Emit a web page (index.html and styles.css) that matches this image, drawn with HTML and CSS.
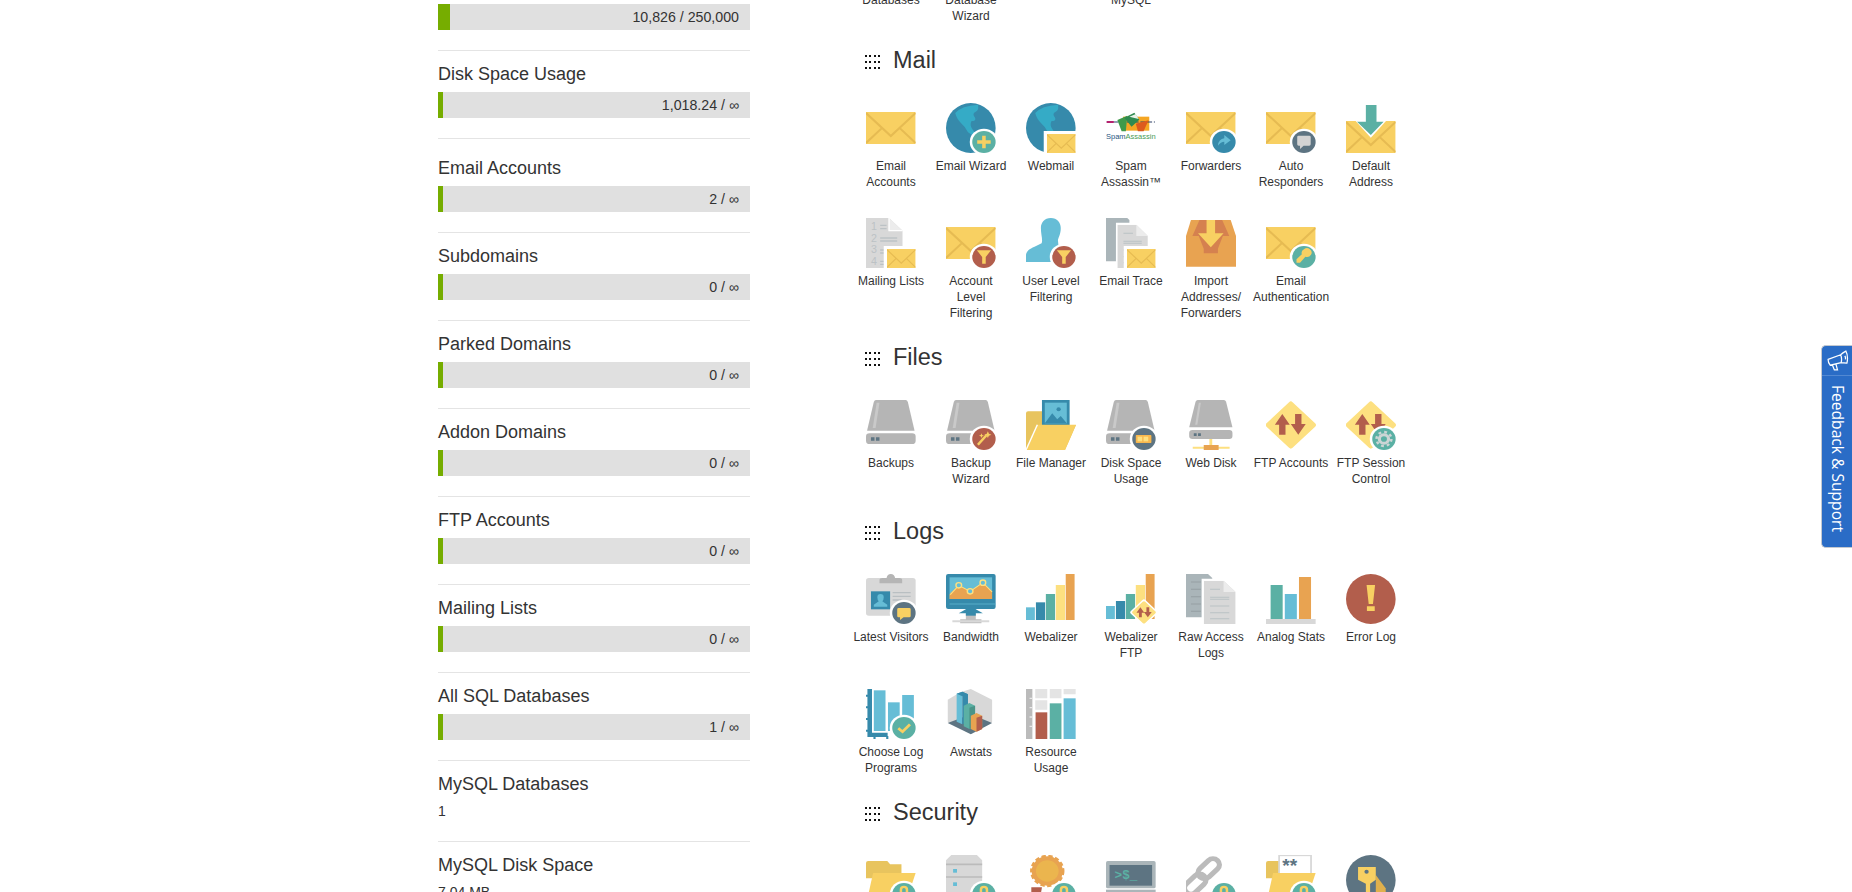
FILE: index.html
```html
<!DOCTYPE html>
<html lang="en">
<head>
<meta charset="utf-8">
<title>cPanel</title>
<link rel="stylesheet" href="styles.css">
</head>
<body>
<svg class="defs" xmlns="http://www.w3.org/2000/svg">
  <symbol id="env" viewBox="0 0 140 96" preserveAspectRatio="none"><rect width="140" height="96" fill="#f8d062"/><path d="M0 3 70 72 140 3M0 93 44 49M140 93 96 49" fill="none" stroke="#e6bb52" stroke-width="6"/></symbol>
  <symbol id="globe" viewBox="0 0 141 150"><ellipse cx="70" cy="75" rx="70" ry="75" fill="#368aab"/><path d="M26 30Q44 8 90 5 94 20 84 26 72 30 82 44 86 54 72 54 66 66 74 78L88 98Q74 100 62 88 54 70 44 62 30 48 26 30Z" fill="#35abc6"/></symbol>
  <symbol id="disk" viewBox="0 0 141 150"><path d="M28 0H112Q116 0 118 6L137 92H3L22 6Q24 0 28 0Z" fill="#b5b5b5"/><path d="M30 8H38L27 84H19Z" fill="#c9c9c9"/><rect y="100" width="140" height="32" rx="10" fill="#b5b5b5"/><path d="M14 112H24V122H14ZM28 112H38V122H28Z" fill="#5d7482"/></symbol>
  <symbol id="dia" viewBox="0 0 141 150"><rect x="18" y="23" width="104" height="104" rx="7" transform="rotate(45 70 75)" fill="#fde080"/></symbol>
  <symbol id="ar" viewBox="0 0 141 150"><path d="M46 42 67 74H55V104H37V74H25ZM91 104 70 72H82V42H100V72H112Z" fill="#b25e4c"/></symbol>
  <symbol id="docb" viewBox="0 0 90 130" preserveAspectRatio="none"><path d="M0 0H56L90 34V130H0Z" fill="#d8d8d8"/><path d="M56 0 90 34H56Z" fill="#ececec"/><path d="M18 26H46M18 50H72M18 56H72M18 76H72M18 96H72M18 114H72" stroke="#b9c1c4" stroke-width="3"/></symbol>
  <symbol id="dots" viewBox="0 0 15 14"><path fill="#111" d="M0 0h2v2H0zM4 0h2v2H4zM9 0h2v2H9zM13 0h2v2h-2zM0 6h2v2H0zM4 6h2v2H4zM9 6h2v2H9zM13 6h2v2h-2zM0 12h2v2H0zM4 12h2v2H4zM9 12h2v2H9zM13 12h2v2h-2z"/></symbol>
  <symbol id="ring" viewBox="0 0 141 150"><circle cx="107" cy="117" r="40" fill="#fff"/></symbol>
  <symbol id="lock" viewBox="0 0 141 150"><use href="#ring" width="141" height="150"/><circle cx="107" cy="117" r="33" fill="#5bb0a4"/><path d="M95 118V104Q95 92 107 92 119 92 119 104V118H112V104Q112 99 107 99 102 99 102 104V118Z" fill="#f8d062"/></symbol>
</svg>

<div class="page">
  <aside class="stats">
    <section class="stat stat-first"><h3 class="stat-name">File Usage</h3><div class="bar"><span class="fill" style="width:12px"></span><span class="val">10,826 / 250,000</span></div></section>
    <section class="stat"><h3 class="stat-name">Disk Space Usage</h3><div class="bar"><span class="fill" style="width:5px"></span><span class="val">1,018.24 / ∞</span></div></section>
    <section class="stat stat-loose"><h3 class="stat-name">Email Accounts</h3><div class="bar"><span class="fill" style="width:5px"></span><span class="val">2 / ∞</span></div></section>
    <section class="stat"><h3 class="stat-name">Subdomains</h3><div class="bar"><span class="fill" style="width:5px"></span><span class="val">0 / ∞</span></div></section>
    <section class="stat"><h3 class="stat-name">Parked Domains</h3><div class="bar"><span class="fill" style="width:5px"></span><span class="val">0 / ∞</span></div></section>
    <section class="stat"><h3 class="stat-name">Addon Domains</h3><div class="bar"><span class="fill" style="width:5px"></span><span class="val">0 / ∞</span></div></section>
    <section class="stat"><h3 class="stat-name">FTP Accounts</h3><div class="bar"><span class="fill" style="width:5px"></span><span class="val">0 / ∞</span></div></section>
    <section class="stat"><h3 class="stat-name">Mailing Lists</h3><div class="bar"><span class="fill" style="width:5px"></span><span class="val">0 / ∞</span></div></section>
    <section class="stat"><h3 class="stat-name">All SQL Databases</h3><div class="bar"><span class="fill" style="width:5px"></span><span class="val">1 / ∞</span></div></section>
    <section class="stat"><h3 class="stat-name">MySQL Databases</h3><div class="plain">1</div></section>
    <section class="stat"><h3 class="stat-name">MySQL Disk Space</h3><div class="plain">7.04 MB</div></section>
  </aside>

  <main class="tools">
    <section class="group group-cut">
      <div class="grid">
        <a class="item"><span class="label">MySQL®<br>Databases</span></a>
        <a class="item"><span class="label">MySQL®<br>Database<br>Wizard</span></a>
        <a class="item"><span class="label">phpMyAdmin</span></a>
        <a class="item"><span class="label">Remote<br>MySQL</span></a>
      </div>
    </section>

    <section class="group">
      <h2 class="group-title"><svg class="dots"><use href="#dots"/></svg>Mail</h2>
      <div class="grid">
        <a class="item"><svg class="ic" viewBox="0 0 141 150" preserveAspectRatio="none"><use href="#env" y="27" width="140" height="96"/></svg><span class="label">Email Accounts</span></a>
        <a class="item"><svg class="ic" viewBox="0 0 141 150" preserveAspectRatio="none"><use href="#globe" width="141" height="150"/><use href="#ring" width="141" height="150"/><circle cx="107" cy="117" r="33" fill="#5bb0a4"/><path d="M102 98H112V112H126V122H112V136H102V122H88V112H102Z" fill="#f8d062"/></svg><span class="label">Email Wizard</span></a>
        <a class="item"><svg class="ic" viewBox="0 0 141 150" preserveAspectRatio="none"><use href="#globe" width="141" height="150"/><rect x="50" y="84" width="91" height="66" fill="#fff"/><use href="#env" x="59" y="93" width="81" height="57"/></svg><span class="label">Webmail</span></a>
        <a class="item"><svg class="ic" viewBox="0 0 141 150" preserveAspectRatio="none"><rect x="48" y="41" width="74" height="42" fill="#f5a623"/><path d="M2 57H138" stroke="#2c3e66" stroke-width="3" stroke-dasharray="14 5"/><path d="M2 57H22" stroke="#b5216e" stroke-width="6"/><path d="M32 51 60 38 56 85 44 85Z" fill="#3f9a4a"/><path d="M52 44 80 29 94 50 72 71Z" fill="#2f8a50"/><path d="M66 41 84 33 92 48Z" fill="#e8f3e8"/><path d="M84 62 120 52 106 85 90 85Z" fill="#dd5a1e"/><text class="spam-t" x="0" y="108" textLength="140" lengthAdjust="spacingAndGlyphs"><tspan fill="#27557f">Spam</tspan><tspan fill="#4a9a55">Assassin</tspan></text></svg><span class="label">Spam Assassin™</span></a>
        <a class="item"><svg class="ic" viewBox="0 0 141 150" preserveAspectRatio="none"><use href="#env" y="27" width="140" height="96"/><use href="#ring" width="141" height="150"/><circle cx="107" cy="117" r="33" fill="#368aab"/><path d="M90 128Q92 108 108 106V96L126 112 108 126V116Q98 116 90 128Z" fill="#66bdd6"/></svg><span class="label">Forwarders</span></a>
        <a class="item"><svg class="ic" viewBox="0 0 141 150" preserveAspectRatio="none"><use href="#env" y="27" width="140" height="96"/><use href="#ring" width="141" height="150"/><circle cx="107" cy="117" r="33" fill="#5d7482"/><path d="M92 98H122Q126 98 126 102V124Q126 128 122 128H106L96 138V128H92Q88 128 88 124V102Q88 98 92 98Z" fill="#d3d3d3"/></svg><span class="label">Auto Responders</span></a>
        <a class="item"><svg class="ic" viewBox="0 0 141 150" preserveAspectRatio="none"><use href="#env" y="54" width="140" height="96"/><path d="M24 50H116L70 104Z" fill="#fff"/><path d="M56 6H86V56H106L70 96 31 56H56Z" fill="#5bb0a4"/></svg><span class="label">Default Address</span></a>

        <a class="item"><svg class="ic" viewBox="0 0 141 150" preserveAspectRatio="none"><path d="M0 0H65L103 38V150H0Z" fill="#d8d8d8"/><path d="M65 0 103 38H65Z" fill="#ececec"/><path d="M65 0V38H103" fill="none" stroke="#fff" stroke-width="4"/><text class="num" x="14" y="36">1</text><text class="num" x="14" y="72">2</text><text class="num" x="14" y="106">3</text><text class="num" x="14" y="142">4</text><path d="M40 22H58M40 32H58M40 60H88M40 69H88M40 96H52M40 105H52M40 130H52M40 139H52" stroke="#bcc2c5" stroke-width="4"/><rect x="50" y="84" width="91" height="66" fill="#fff"/><use href="#env" x="59" y="93" width="81" height="57"/></svg><span class="label">Mailing Lists</span></a>
        <a class="item"><svg class="ic" viewBox="0 0 141 150" preserveAspectRatio="none"><use href="#env" y="27" width="140" height="96"/><use href="#ring" width="141" height="150"/><circle cx="107" cy="117" r="33" fill="#b25e4c"/><path d="M87 97H127L112 117V137H102V117Z" fill="#f8d062"/></svg><span class="label">Account<br>Level<br>Filtering</span></a>
        <a class="item"><svg class="ic" viewBox="0 0 141 150" preserveAspectRatio="none"><path d="M70 0C88 0 98 14 98 30 98 48 92 58 90 66L96 132H0V112C0 100 10 92 24 86L44 76C48 66 42 50 42 30 42 14 52 0 70 0Z" fill="#66bdd6"/><use href="#ring" width="141" height="150"/><circle cx="107" cy="117" r="33" fill="#b25e4c"/><path d="M87 97H127L112 117V137H102V117Z" fill="#f8d062"/></svg><span class="label">User Level Filtering</span></a>
        <a class="item"><svg class="ic" viewBox="0 0 141 150" preserveAspectRatio="none"><path d="M0 0H60L66 6V130H0Z" fill="#aab5b9"/><path d="M28 14H92L122 46V150H28Z" fill="#fff"/><use href="#docb" x="32" y="20" width="86" height="130"/><rect x="50" y="84" width="91" height="66" fill="#fff"/><use href="#env" x="59" y="93" width="81" height="57"/></svg><span class="label">Email Trace</span></a>
        <a class="item"><svg class="ic" viewBox="0 0 141 150" preserveAspectRatio="none"><path d="M14 6H126L141 54V146H0V54Z" fill="#e8a351"/><path d="M38 6H102L122 54H104L90 92V106H50V92L36 54H18Z" fill="#d5814f"/><path d="M58 6H82V46H106L70 88 34 46H58Z" fill="#f8d062"/></svg><span class="label">Import Addresses/ Forwarders</span></a>
        <a class="item"><svg class="ic" viewBox="0 0 141 150" preserveAspectRatio="none"><use href="#env" y="27" width="140" height="96"/><use href="#ring" width="141" height="150"/><circle cx="107" cy="117" r="33" fill="#5bb0a4"/><path d="M107 94a13 13 0 1 1 4 22L96 134H86V124L101 109A13 13 0 0 1 107 94Z" fill="#f8d062"/></svg><span class="label">Email Authentication</span></a>
      </div>
    </section>

    <section class="group group-files">
      <h2 class="group-title"><svg class="dots"><use href="#dots"/></svg>Files</h2>
      <div class="grid">
        <a class="item"><svg class="ic" viewBox="0 0 141 150" preserveAspectRatio="none"><use href="#disk" width="141" height="150"/></svg><span class="label">Backups</span></a>
        <a class="item"><svg class="ic" viewBox="0 0 141 150" preserveAspectRatio="none"><use href="#disk" width="141" height="150"/><use href="#ring" width="141" height="150"/><circle cx="107" cy="117" r="33" fill="#b25e4c"/><path d="M90 134 114 106" stroke="#f8d062" stroke-width="7"/><path d="M118 94l3 7 7 3-7 3-3 7-3-7-7-3 7-3ZM100 100l2 5 5 2-5 2-2 5-2-5-5-2 5-2Z" fill="#f8d062"/></svg><span class="label">Backup Wizard</span></a>
        <a class="item"><svg class="ic" viewBox="0 0 141 150" preserveAspectRatio="none"><path d="M0 40Q0 34 6 34H50V75H141L110 150H0Z" fill="#e8c45e"/><rect x="45" width="78" height="76" fill="#368aab"/><rect x="53" y="8" width="62" height="62" fill="#66bdd6"/><path d="M53 70 74 40 88 58 98 48 115 70Z" fill="#368aab"/><circle cx="92" cy="28" r="6" fill="#368aab"/><path d="M32 74H141L110 150H0Z" fill="#f8d062"/><path d="M32 74 0 150" stroke="#fff" stroke-width="4"/></svg><span class="label">File Manager</span></a>
        <a class="item"><svg class="ic" viewBox="0 0 141 150" preserveAspectRatio="none"><use href="#disk" width="141" height="150"/><use href="#ring" width="141" height="150"/><circle cx="107" cy="117" r="33" fill="#5d7482"/><rect x="84" y="105" width="44" height="24" rx="2" fill="#f8b84e"/><rect x="89" y="110" width="13" height="14" fill="#fde080"/><rect x="106" y="110" width="13" height="14" fill="#fde080"/></svg><span class="label">Disk Space Usage</span></a>
        <a class="item"><svg class="ic" viewBox="0 0 141 150" preserveAspectRatio="none"><path d="M33 0H107Q111 0 113 5L131 82H9L27 5Q29 0 33 0Z" fill="#b5b5b5"/><path d="M36 8H42L32 74H26Z" fill="#c9c9c9"/><rect x="9" y="90" width="122" height="27" rx="9" fill="#b5b5b5"/><path d="M22 100H30V108H22ZM34 100H42V108H34Z" fill="#5d7482"/><path d="M66 117H74V136H66ZM19 140H123V146H19Z" fill="#fde080"/><rect x="50" y="135" width="42" height="15" fill="#e8a351"/></svg><span class="label">Web Disk</span></a>
        <a class="item"><svg class="ic" viewBox="0 0 141 150" preserveAspectRatio="none"><use href="#dia" width="141" height="150"/><use href="#ar" width="141" height="150"/></svg><span class="label">FTP Accounts</span></a>
        <a class="item"><svg class="ic" viewBox="0 0 141 150" preserveAspectRatio="none"><use href="#dia" width="141" height="150"/><use href="#ar" width="141" height="150"/><use href="#ring" width="141" height="150"/><circle cx="107" cy="117" r="33" fill="#5bb0a4"/><circle cx="107" cy="117" r="21" fill="none" stroke="#ccd5d5" stroke-width="7" stroke-dasharray="8 8.5"/><circle cx="107" cy="117" r="13" fill="none" stroke="#ccd5d5" stroke-width="9"/></svg><span class="label">FTP Session Control</span></a>
      </div>
    </section>

    <section class="group">
      <h2 class="group-title"><svg class="dots"><use href="#dots"/></svg>Logs</h2>
      <div class="grid">
        <a class="item"><svg class="ic" viewBox="0 0 141 150" preserveAspectRatio="none"><rect y="12" width="140" height="113" rx="8" fill="#d8d8d8"/><path d="M38 28V18Q38 12 46 12H58Q60 0 70 0 80 0 82 12H94Q102 12 102 18V28Z" fill="#b5b5b5"/><rect x="14" y="52" width="54" height="54" fill="#368aab"/><path d="M41 60Q50 60 50 70 50 78 46 82L60 92V98H22V92L36 82Q32 78 32 70 32 60 41 60Z" fill="#66bdd6"/><path d="M75 56H126M75 67H126M75 78H100" stroke="#b9bfc2" stroke-width="4"/><use href="#ring" width="141" height="150"/><circle cx="107" cy="117" r="33" fill="#5d7482"/><path d="M92 102H122Q126 102 126 106V126Q126 130 122 130H106L96 138V130H92Q88 130 88 126V106Q88 102 92 102Z" fill="#f8d062"/></svg><span class="label">Latest Visitors</span></a>
        <a class="item"><svg class="ic" viewBox="0 0 141 150" preserveAspectRatio="none"><path d="M40 148H100V136H84V118H56V136H40Z" fill="#bfbfbf"/><path d="M18 142H122" stroke="#d8d8d8" stroke-width="6"/><rect x="56" y="105" width="28" height="20" fill="#368aab"/><path d="M36 118H104L84 106H56Z" fill="#368aab"/><rect width="140" height="105" rx="6" fill="#368aab"/><rect x="10" y="10" width="120" height="65" fill="#66bdd6"/><path d="M10 75V60L36 34 68 52 104 26 130 52V75Z" fill="#e8a351"/><path d="M10 90H140" stroke="#66bdd6" stroke-width="2"/><path d="M12 62 36 34 68 52 104 26 130 54" fill="none" stroke="#fde080" stroke-width="3"/><g fill="#66bdd6" stroke="#fde080" stroke-width="4"><circle cx="36" cy="34" r="8"/><circle cx="68" cy="52" r="8"/><circle cx="104" cy="26" r="8"/></g></svg><span class="label">Bandwidth</span></a>
        <a class="item"><svg class="ic" viewBox="0 0 141 150" preserveAspectRatio="none"><rect y="100" width="25" height="38" fill="#66bdd6"/><rect x="28" y="85" width="26" height="53" fill="#368aab"/><rect x="56" y="60" width="26" height="78" fill="#5bb0a4"/><rect x="84" y="33" width="26" height="105" fill="#fde080"/><rect x="112" width="25" height="138" fill="#e8a351"/></svg><span class="label">Webalizer</span></a>
        <a class="item"><svg class="ic" viewBox="0 0 141 150" preserveAspectRatio="none"><rect y="96" width="25" height="39" fill="#66bdd6"/><rect x="28" y="81" width="26" height="54" fill="#368aab"/><rect x="56" y="60" width="26" height="75" fill="#5bb0a4"/><rect x="84" y="33" width="26" height="102" fill="#fde080"/><rect x="112" width="25" height="135" fill="#e8a351"/><rect x="78" y="86" width="58" height="58" rx="6" transform="rotate(45 107 115)" fill="#fff"/><rect x="82" y="90" width="50" height="50" rx="5" transform="rotate(45 107 115)" fill="#fde080"/><path d="M97 100 108 116H101V130H93V116H86ZM118 130 107 114H114V100H122V114H129Z" fill="#b25e4c"/></svg><span class="label">Webalizer FTP</span></a>
        <a class="item"><svg class="ic" viewBox="0 0 141 150" preserveAspectRatio="none"><path d="M0 0H62L74 12V130H0Z" fill="#aab5b9"/><path d="M14 24H42M14 46H42M14 68H42M14 90H42M14 112H42" stroke="#959fa3" stroke-width="3"/><path d="M44 14H104L146 56V150H44Z" fill="#fff"/><use href="#docb" x="50" y="20" width="90" height="130"/></svg><span class="label">Raw Access Logs</span></a>
        <a class="item"><svg class="ic" viewBox="0 0 141 150" preserveAspectRatio="none"><rect x="13" y="33" width="34" height="102" fill="#5bb0a4"/><rect x="53" y="60" width="34" height="75" fill="#66bdd6"/><rect x="93" y="9" width="34" height="126" fill="#e8a351"/><rect y="135" width="140" height="15" fill="#d8d8d8"/></svg><span class="label">Analog Stats</span></a>
        <a class="item"><svg class="ic" viewBox="0 0 141 150" preserveAspectRatio="none"><ellipse cx="70" cy="75" rx="70" ry="75" fill="#b25e4c"/><path d="M58 33H82L76 90H64ZM59 97H81V111H59Z" fill="#f8d062"/></svg><span class="label">Error Log</span></a>

        <a class="item"><svg class="ic" viewBox="0 0 141 150" preserveAspectRatio="none"><path d="M7 0H14V134H58V141H7ZM0 20H8M0 55H8M0 90H8M0 125H8M24 141V150M60 141V150" stroke="#368aab" stroke-width="6" fill="#368aab"/><rect x="22" y="4" width="33" height="122" fill="#66bdd6"/><rect x="62" y="40" width="33" height="86" fill="#66bdd6"/><rect x="102" y="18" width="33" height="108" fill="#66bdd6"/><use href="#ring" width="141" height="150"/><circle cx="107" cy="117" r="33" fill="#5bb0a4"/><path d="M91 118 103 128 124 106" fill="none" stroke="#f8d062" stroke-width="8"/></svg><span class="label">Choose Log Programs</span></a>
        <a class="item"><svg class="ic" viewBox="0 0 141 150" preserveAspectRatio="none"><path d="M40 10 70 0 130 32V100L70 132 5 100V32Z" fill="#d8d8d8"/><path d="M5 102 70 76 130 102 70 136Z" fill="#5d7482"/><path d="M30 14 46 8V106L30 98Z" fill="#66bdd6"/><path d="M46 8 62 16V100L46 106Z" fill="#368aab"/><path d="M30 14 46 8 62 16 46 22Z" fill="#368aab"/><path d="M50 50 66 42 82 50V114L66 120 50 112Z" fill="#5bb0a4"/><path d="M66 120V56L82 50V114Z" fill="#4a9488"/><path d="M70 80 86 72 102 80V120L86 128 70 120Z" fill="#e8a351"/><path d="M86 128V86L102 80V120Z" fill="#b25e4c"/></svg><span class="label">Awstats</span></a>
        <a class="item"><svg class="ic" viewBox="0 0 141 150" preserveAspectRatio="none"><path d="M26 0H60V28H26ZM67 0H100V28H67ZM106 0H140V16H106ZM26 34H60V62H26Z" fill="#e4e4e4"/><rect width="18" height="150" fill="#bbb"/><path d="M10 28H18M10 56H18M10 84H18M10 112H18" stroke="#e8e8e8" stroke-width="4"/><rect x="27" y="70" width="33" height="80" fill="#b25e4c"/><rect x="67" y="43" width="33" height="107" fill="#5bb0a4"/><rect x="106" y="28" width="34" height="122" fill="#66bdd6"/></svg><span class="label">Resource Usage</span></a>
      </div>
    </section>

    <section class="group">
      <h2 class="group-title"><svg class="dots"><use href="#dots"/></svg>Security</h2>
      <div class="grid">
        <a class="item"><svg class="ic" viewBox="0 0 141 150" preserveAspectRatio="none"><path d="M0 24Q0 18 6 18H60L68 28H100V70H0Z" fill="#e8c45e"/><path d="M20 54H140L110 150H0Z" fill="#f8d062"/><use href="#lock" width="141" height="150"/></svg><span class="label">Folder Privacy</span></a>
        <a class="item"><svg class="ic" viewBox="0 0 141 150" preserveAspectRatio="none"><path d="M15 0H87L102 16V150H0V16Z" fill="#d8d8d8"/><path d="M0 28H102M0 66H102" stroke="#bbb" stroke-width="5"/><rect x="20" y="42" width="11" height="11" fill="#66bdd6"/><rect x="20" y="82" width="11" height="11" fill="#66bdd6"/><use href="#lock" width="141" height="150"/></svg><span class="label">IP Blocker</span></a>
        <a class="item"><svg class="ic" viewBox="0 0 141 150" preserveAspectRatio="none"><path d="M15 97 45 97 38 140 15 130Z" fill="#b25e4c"/><circle cx="60" cy="48" r="44" fill="none" stroke="#e8a351" stroke-width="9" stroke-dasharray="12 7"/><circle cx="60" cy="48" r="44" fill="#e8a351"/><circle cx="60" cy="48" r="32" fill="#ebb54e"/><use href="#lock" width="141" height="150"/></svg><span class="label">SSL/TLS</span></a>
        <a class="item"><svg class="ic" viewBox="0 0 141 150" preserveAspectRatio="none"><rect y="18" width="140" height="82" rx="5" fill="#aab5b9"/><rect x="10" y="30" width="120" height="62" fill="#5d7482"/><text class="term" x="24" y="72">&gt;$_</text><rect y="104" width="140" height="46" fill="#aab5b9"/></svg><span class="label">SSH Access</span></a>
        <a class="item"><svg class="ic" viewBox="0 0 141 150" preserveAspectRatio="none"><g fill="none" stroke="#bbb" stroke-width="15"><rect x="46" y="6" width="36" height="70" rx="18" transform="rotate(45 64 41)"/><rect x="8" y="52" width="36" height="70" rx="18" transform="rotate(45 26 87)"/></g><use href="#lock" width="141" height="150"/></svg><span class="label">Hotlink Protection</span></a>
        <a class="item"><svg class="ic" viewBox="0 0 141 150" preserveAspectRatio="none"><path d="M0 24Q0 18 6 18H40V70H0Z" fill="#e8c45e"/><rect x="37" y="1" width="90" height="64" fill="#fff" stroke="#d8d8d8" stroke-width="5"/><text class="stars" x="46" y="52">**</text><path d="M20 54H140L110 150H0Z" fill="#f8d062"/><use href="#lock" width="141" height="150"/></svg><span class="label">Password Protect</span></a>
        <a class="item"><svg class="ic" viewBox="0 0 141 150" preserveAspectRatio="none"><ellipse cx="70" cy="75" rx="70" ry="75" fill="#5d7482"/><path d="M84 60 112 100V140H84Z" fill="#e0b04c"/><path d="M34 36H84V74L68 86V124H56V86L34 74Z" fill="#f8d062"/><circle cx="58" cy="50" r="6" fill="#5d7482"/></svg><span class="label">GnuPG Keys</span></a>
      </div>
    </section>
  </main>
</div>

<a class="feedback">
  <span class="fb-head"><svg class="fb-ic" viewBox="0 0 22 20"><path d="M2 9 14 4.500Q16 2.500 19 1 21.500 6 20 12.500 17 12 14.500 12L4 14.500Q2 12 2 9ZM14 4.500Q15.500 8 14.500 12M6 14 8 19H11L9.500 13.500M18 5.500Q19 7 18.500 9" fill="none" stroke="#fff" stroke-width="1.200"/></svg></span>
  <span class="fb-text">Feedback &amp; Support</span>
</a>
</body>
</html>
```
FILE: styles.css
```css
* { box-sizing: border-box; }
html, body { margin: 0; height: 892px; overflow: hidden; background: #fff; }
body { font-family: "Liberation Sans", Arial, sans-serif; color: #333; font-size: 14px; }
.defs { display: none; }

.page { display: flex; height: 892px; padding-left: 438px; overflow: hidden; }

.stats { width: 312px; flex: none; margin-right: 101px; }
.stat { padding: 10px 0 20px; border-bottom: 1px solid #e4e4e4; }
.stat-first { margin-top: -37px; }
.stat-loose { padding-top: 16px; }
.stat-name { margin: 0 0 5px; font-size: 18px; line-height: 26px; font-weight: 400; color: #333; }
.bar { display: flex; height: 26px; background: #e0e0e0; line-height: 26px; font-size: 14.2px; }
.fill { display: block; background: #76ad00; flex: none; }
.val { margin-left: auto; padding-right: 11px; }
.plain { margin-top: -1px; line-height: 20px; font-size: 14px; }

.tools { width: 560px; flex: none; }
.group { padding-bottom: 20px; }
.group-cut { margin-top: -29px; }
.group-files { padding-bottom: 28px; }
.group-title { display: flex; align-items: center; margin: 0 0 29px; padding: 2px 0 0 14px; height: 30px; font-size: 23.5px; line-height: 28px; font-weight: 400; color: #333; }
.dots { width: 15px; height: 14px; margin: 4px 13px 0 0; flex: none; }

.grid { display: grid; grid-template-columns: repeat(7, 80px); row-gap: 28px; }
.item { display: flex; flex-direction: column; align-items: center; text-align: center; min-width: 0; }
.ic { display: block; width: 50px; height: 50px; flex: none; overflow: hidden; }
.label { display: block; max-width: 76px; margin-top: 5px; font-size: 12px; line-height: 16px; color: #333; }

.spam-t { font-family: "Liberation Sans", Arial, sans-serif; font-size: 21px; }
.num { font-family: "Liberation Sans", Arial, sans-serif; font-size: 30px; fill: #bcc2c5; }
.term { font-family: "Liberation Mono", monospace; font-weight: 700; font-size: 36px; fill: #5bb0a4; }
.stars { font-family: "Liberation Sans", Arial, sans-serif; font-weight: 700; font-size: 54px; fill: #5d7482; }

.feedback { position: absolute; top: 345px; right: 0; width: 31px; height: 203px; display: flex; flex-direction: column; align-items: center; background: #2a6cc6; border: 1px solid #c4c9d0; border-right: 0; border-radius: 5px 0 0 5px; color: #fff; }
.fb-head { display: flex; align-items: center; justify-content: center; width: 100%; height: 30px; flex: none; border-bottom: 1px solid #5288d2; }
.fb-ic { width: 23px; height: 21px; }
.fb-text { margin-top: 9px; writing-mode: vertical-rl; font-family: "Open Sans", sans-serif; font-size: 15.6px; line-height: 29px; white-space: nowrap; }
```
